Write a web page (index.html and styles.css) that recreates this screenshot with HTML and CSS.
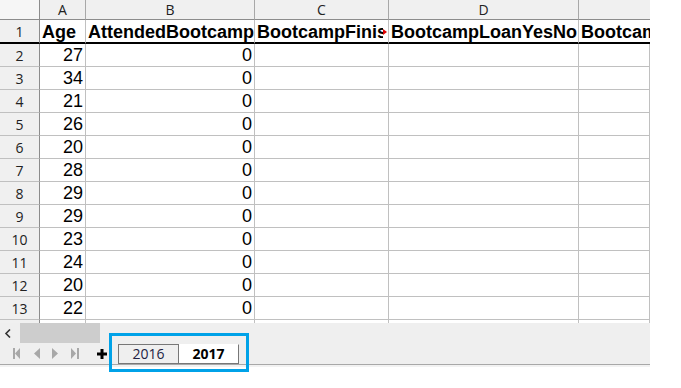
FILE: index.html
```html
<!DOCTYPE html>
<html>
<head>
<meta charset="utf-8">
<link rel="stylesheet" href="styles.css">
</head>
<body>
<div class="app">
  <div class="sheet">
    <div class="grid">
      <div class="corner"></div>
      <div class="ch">A</div>
      <div class="ch">B</div>
      <div class="ch">C</div>
      <div class="ch">D</div>
      <div class="ch last"></div>

      <div class="rh r1">1</div>
      <div class="c r1 b">Age</div>
      <div class="c r1 b">AttendedBootcamp</div>
      <div class="c r1 b clip"><span class="txt">BootcampFinish</span><span class="more"></span></div>
      <div class="c r1 b">BootcampLoanYesNo</div>
      <div class="c r1 b clipend">BootcampName</div>

      <div class="rh">2</div><div class="c n">27</div><div class="c n">0</div><div class="c"></div><div class="c"></div><div class="c"></div>
      <div class="rh">3</div><div class="c n">34</div><div class="c n">0</div><div class="c"></div><div class="c"></div><div class="c"></div>
      <div class="rh">4</div><div class="c n">21</div><div class="c n">0</div><div class="c"></div><div class="c"></div><div class="c"></div>
      <div class="rh">5</div><div class="c n">26</div><div class="c n">0</div><div class="c"></div><div class="c"></div><div class="c"></div>
      <div class="rh">6</div><div class="c n">20</div><div class="c n">0</div><div class="c"></div><div class="c"></div><div class="c"></div>
      <div class="rh">7</div><div class="c n">28</div><div class="c n">0</div><div class="c"></div><div class="c"></div><div class="c"></div>
      <div class="rh">8</div><div class="c n">29</div><div class="c n">0</div><div class="c"></div><div class="c"></div><div class="c"></div>
      <div class="rh">9</div><div class="c n">29</div><div class="c n">0</div><div class="c"></div><div class="c"></div><div class="c"></div>
      <div class="rh">10</div><div class="c n">23</div><div class="c n">0</div><div class="c"></div><div class="c"></div><div class="c"></div>
      <div class="rh">11</div><div class="c n">24</div><div class="c n">0</div><div class="c"></div><div class="c"></div><div class="c"></div>
      <div class="rh">12</div><div class="c n">20</div><div class="c n">0</div><div class="c"></div><div class="c"></div><div class="c"></div>
      <div class="rh">13</div><div class="c n">22</div><div class="c n">0</div><div class="c"></div><div class="c"></div><div class="c"></div>
      <div class="rh">14</div><div class="c n"></div><div class="c n"></div><div class="c"></div><div class="c"></div><div class="c"></div>
    </div>
  </div>

  <div class="bottom">
    <div class="hscroll">
      <div class="arrow">
        <svg width="8" height="9" viewBox="0 0 8 9"><path d="M6 0.5 L2 4.5 L6 8.5" fill="none" stroke="#333" stroke-width="1.6"/></svg>
      </div>
      <div class="thumb"></div>
    </div>
    <div class="tabbar">
      <div class="nav">
        <svg width="8" height="11" viewBox="0 0 8 11"><rect x="0" y="0" width="2" height="11" fill="#a8a8a8"/><path d="M7 0 L2 5.5 L7 11 Z" fill="#a8a8a8"/></svg>
        <svg width="7" height="11" viewBox="0 0 7 11"><path d="M7 0 L1 5.5 L7 11 Z" fill="#a8a8a8"/></svg>
        <svg width="7" height="11" viewBox="0 0 7 11"><path d="M0 0 L6 5.5 L0 11 Z" fill="#a8a8a8"/></svg>
        <svg width="8" height="11" viewBox="0 0 8 11"><path d="M0 0 L5 5.5 L0 11 Z" fill="#a8a8a8"/><rect x="6" y="0" width="2" height="11" fill="#a8a8a8"/></svg>
      </div>
      <div class="plus">
        <svg width="10" height="10" viewBox="0 0 10 10"><rect x="3.5" y="0" width="3" height="10" fill="#000"/><rect x="0" y="3.5" width="10" height="3" fill="#000"/></svg>
      </div>
      <div class="tabs">
        <div class="tab">2016</div>
        <div class="tab active">2017</div>
      </div>
    </div>
    <div class="highlight"></div>
  </div>
  <div class="foot"></div>
</div>
</body>
</html>
```

FILE: styles.css
```css
* { box-sizing: border-box; }
html, body { margin: 0; padding: 0; background: #fff; }
body { min-height: 388px; }
.app { width: 650px; position: relative; padding-bottom: 22px; }

.sheet { height: 323px; overflow: hidden; }
.grid {
  display: grid;
  grid-template-columns: 40px 46px 169px 134px 190px 71px;
  grid-template-rows: 20px 24px repeat(13, 23px);
}
.corner {
  background: #f6f6f6;
  border-right: 1px solid #8c8c8c;
  border-bottom: 1px solid #8c8c8c;
}
.ch {
  background: #f0f0f0;
  border-right: 1px solid #a8a8a8;
  border-bottom: 1px solid #8c8c8c;
  font-family: "Open Sans", "Noto Sans", sans-serif;
  font-size: 14px;
  color: #222;
  text-align: center;
  line-height: 19px;
}
.ch.last { border-right: none; }
.rh {
  background: #f0f0f0;
  border-right: 1px solid #8c8c8c;
  border-bottom: 1px solid #c0c0c0;
  font-family: "Open Sans", "Noto Sans", sans-serif;
  font-size: 14px;
  color: #222;
  text-align: center;
  line-height: 23px;
}
.c {
  border-right: 1px solid #c0c0c0;
  border-bottom: 1px solid #c0c0c0;
  font-family: "Liberation Sans", Arial, sans-serif;
  font-size: 18px;
  color: #000;
  line-height: 23px;
  white-space: nowrap;
  overflow: hidden;
}
.c.n { text-align: right; padding-right: 2px; }
.r1 { border-bottom: 2px solid #000; line-height: 24px; }
.rh.r1 { border-bottom: 2px solid #000; }
.c.b { font-weight: bold; padding-left: 2px; }
.clip { display: flex; align-items: flex-start; padding-right: 1px; }
.clip .txt { flex: 1 1 auto; min-width: 0; overflow: hidden; }
.more {
  flex: 0 0 auto;
  margin-top: 9px;
  width: 0; height: 0;
  border-top: 3.5px solid transparent;
  border-bottom: 3.5px solid transparent;
  border-left: 4px solid #e00000;
}
.clipend { border-right: none; }

.bottom {
  position: relative;
  height: 42px;
  background: #efefef;
  border-bottom: 1px solid #a8a8a8;
}
.foot { height: 2px; background: #f2f2f2; }
.hscroll { display: flex; height: 20px; }
.arrow { width: 20px; display: flex; align-items: center; justify-content: center; padding-right: 5px; }
.thumb { width: 80px; height: 20px; background: #cdcdcd; }
.tabbar { display: flex; align-items: flex-start; height: 21px; padding-left: 13px; }
.nav { display: flex; gap: 12px; padding-top: 5px; }
.nav svg { display: block; }
.plus { margin-left: 18px; padding-top: 6px; }
.plus svg { display: block; }
.tabs { display: flex; margin-left: 11px; padding-top: 1px; }
.tab {
  width: 61px;
  height: 20px;
  border: 1px solid #777;
  background: #efefef;
  font-family: "Open Sans", "Noto Sans", sans-serif;
  font-size: 14px;
  color: #222244;
  text-align: center;
  line-height: 17px;
}
.tab.active {
  width: 60px;
  border-left: none;
  border-top-color: #fff;
  background: #fff;
  font-weight: bold;
  color: #000;
}
.highlight {
  position: absolute;
  left: 109px;
  top: 10px;
  width: 140px;
  height: 39px;
  border: 3px solid #00a2e8;
}
```
